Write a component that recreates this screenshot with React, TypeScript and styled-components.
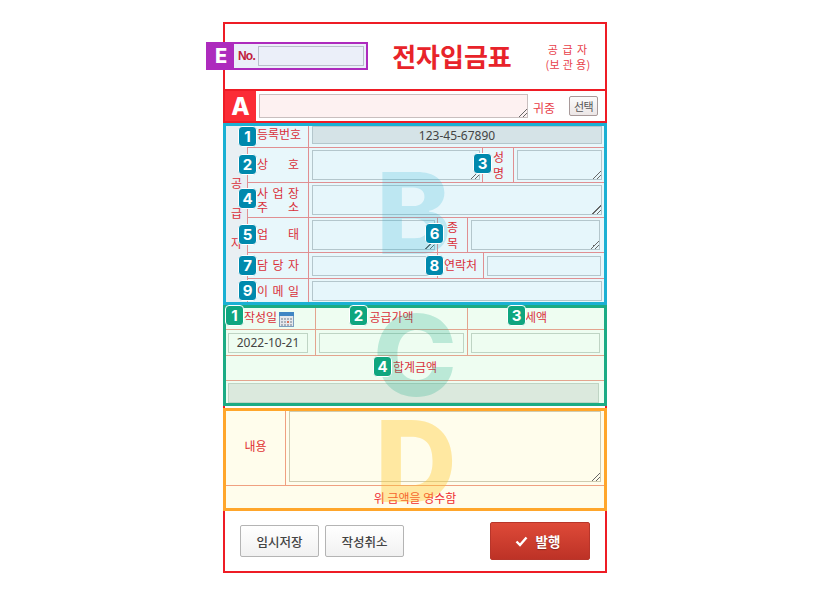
import React from 'react';
import styled, { createGlobalStyle } from 'styled-components';

const Global = createGlobalStyle`
  html, body { margin: 0; padding: 0; background: #fff; }
  body { font-family: 'Noto Sans CJK KR', 'Noto Sans', sans-serif; font-size: 12px; }
  * { box-sizing: border-box; }
`;

const Page = styled.div`
  width: 830px;
  height: 600px;
  padding: 22px 223px 0;
`;
const Frame = styled.div`
  width: 384px;
  height: 551px;
  border: 2px solid #ee1c25;
  display: flex;
  flex-direction: column;
  position: relative;
`;
const Head = styled.header`
  height: 65px;
  display: flex;
  align-items: center;
  padding: 0 15px 0 133px;
`;
const Title = styled.h1`
  margin: 0 0 2px;
  flex: 1;
  text-align: center;
  font-size: 26px;
  font-weight: 700;
  color: #e8232a;
  white-space: nowrap;
`;
const Who = styled.div`
  width: 44px;
  text-align: center;
  font-size: 11px;
  line-height: 15px;
  letter-spacing: 1px;
  color: #e8404a;
  white-space: nowrap;
`;
const WhoSub = styled.span`
  letter-spacing: 0.3px;
  margin-left: -3px;
  margin-right: -3px;
`;
const Tag = styled.div`
  position: absolute;
  left: -19px;
  top: 18px;
  width: 162px;
  height: 28px;
  display: flex;
  align-items: center;
  border: 2px solid #ad2bbd;
  background: #ebeff9;
`;
const TagLetter = styled.span`
  width: 26px;
  height: 24px;
  background: #ad2bbd;
  color: #fff;
  font: 800 20px 'Inter', sans-serif;
  display: flex;
  align-items: center;
  justify-content: center;
`;
const TagNo = styled.span`
  margin-left: 4px;
  width: 20px;
  font: 700 12px 'Liberation Sans', sans-serif;
  letter-spacing: -0.8px;
  color: #c0203c;
`;
const Field = styled.div<{ $w?: number; $h: number; $bg: string; $line: string; $grow?: boolean; $resize?: boolean }>`
  position: relative;
  flex: ${(p) => (p.$grow ? '1' : 'none')};
  width: ${(p) => (p.$w ? p.$w + 'px' : 'auto')};
  height: ${(p) => p.$h}px;
  background: ${(p) => p.$bg};
  border: 1px solid ${(p) => p.$line};
  display: flex;
  align-items: center;
  justify-content: center;
  font: 12px 'Noto Sans', 'Open Sans', sans-serif;
  color: #444;
  ${(p) =>
    p.$resize
      ? `&::after {
    content: '';
    position: absolute;
    right: 0;
    bottom: 0;
    width: 9px;
    height: 9px;
    background: linear-gradient(135deg, transparent 0 50%, #666 50% 58%, transparent 58% 74%, #666 74% 82%, transparent 82%);
  }`
      : ''}
`;
const RowA = styled.div`
  height: 34px;
  border-top: 2px solid #ee1c25;
  border-bottom: 2px solid #ee1c25;
  display: flex;
  align-items: center;
  background: #fff;
  padding-right: 7px;
`;
const LetterA = styled.span`
  width: 31px;
  height: 30px;
  background: #fb2c36;
  color: #fff;
  font: 800 24px 'Inter', sans-serif;
  display: flex;
  align-items: center;
  justify-content: center;
`;
const SpotA = styled.span`
  margin-left: 3px;
`;
const AText = styled.span`
  margin: 2px 0 0 5px;
  font-size: 12px;
  color: #e8404a;
  width: 36px;
  white-space: nowrap;
`;
const PickBtn = styled.button`
  width: 29px;
  height: 20px;
  padding: 0;
  margin-left: auto;
  border: 1px solid #a89a9a;
  border-radius: 2px;
  background: linear-gradient(#fbfbfb, #ece6e6);
  font: 11px 'Noto Sans CJK KR', sans-serif;
  letter-spacing: -0.5px;
  color: #555;
`;
const Section = styled.section<{ $border: string; $bg: string; $h: number; $gap?: number }>`
  position: relative;
  flex: none;
  height: ${(p) => p.$h}px;
  border: 3px solid ${(p) => p.$border};
  background: ${(p) => p.$bg};
  margin: ${(p) => p.$gap ?? 0}px -2px 0;
`;
const Mark = styled.span<{ $color: string; $top: number; $left: number }>`
  position: absolute;
  z-index: 1;
  pointer-events: none;
  left: ${(p) => p.$left}px;
  top: ${(p) => p.$top}px;
  font: 800 113px/113px 'Inter', sans-serif;
  color: ${(p) => p.$color};
`;
const Supplier = styled.div`
  display: flex;
  height: 100%;
`;
const SideLabel = styled.div`
  flex: none;
  width: 21px;
  background: #e9eff3;
  color: #d9303a;
  font-size: 12px;
  line-height: 30px;
  display: flex;
  flex-direction: column;
  align-items: center;
  justify-content: center;
  padding-bottom: 2px;
`;
const Rows = styled.div`
  flex: 1;
  min-width: 0;
  display: flex;
  flex-direction: column;
`;
const Row = styled.div<{ $h: number; $last?: boolean }>`
  flex: none;
  height: ${(p) => p.$h}px;
  display: flex;
  border-bottom: ${(p) => (p.$last ? 'none' : '1px solid #e08f92')};
`;
const Label = styled.div<{ $w: number; $first?: boolean; $pl?: number; $pb?: number }>`
  position: relative;
  flex: none;
  width: ${(p) => p.$w}px;
  height: 100%;
  border-left: ${(p) => (p.$first ? 'none' : '1px solid #e08f92')};
  color: #d9303a;
  font-size: 12px;
  line-height: 14px;
  white-space: nowrap;
  display: flex;
  flex-direction: column;
  justify-content: center;
  padding: 0 9px ${(p) => p.$pb ?? 1}px ${(p) => p.$pl ?? 9}px;
`;
const Spread = styled.div`
  display: flex;
  justify-content: space-between;
`;
const VLabel = styled(Label)`
  padding-right: 0;
  gap: 2px;
`;
const Slot = styled.div<{ $w?: number; $pl?: number; $pr?: number; $pb?: number }>`
  flex: ${(p) => (p.$w ? 'none' : '1')};
  width: ${(p) => (p.$w ? p.$w + 'px' : 'auto')};
  min-width: 0;
  height: 100%;
  display: flex;
  align-items: center;
  border-left: 1px solid #e08f92;
  padding: 0 ${(p) => p.$pr ?? 2}px ${(p) => p.$pb ?? 0}px ${(p) => p.$pl ?? 3}px;
`;
const Badge = styled.span<{ $c: string; $l: number; $t: number }>`
  position: absolute;
  z-index: 2;
  left: ${(p) => p.$l}px;
  top: ${(p) => p.$t}px;
  width: 19px;
  height: 21px;
  border: 1px solid #fff;
  border-radius: 4px;
  background: ${(p) => p.$c};
  color: #fff;
  font: 700 15px 'Inter', sans-serif;
  display: flex;
  align-items: center;
  justify-content: center;
`;
const Amount = styled.div`
  height: 100%;
`;
const Cols = styled.div<{ $h: number }>`
  height: ${(p) => p.$h}px;
  display: grid;
  grid-template-columns: 89px 152px 1fr;
  border-bottom: 1px solid #e3a48e;
`;
const Col = styled.div<{ $first?: boolean; $pl?: number; $pr?: number; $pb?: number }>`
  border-left: ${(p) => (p.$first ? 'none' : '1px solid #e3a48e')};
  color: #d9303a;
  font-size: 12px;
  display: flex;
  align-items: center;
  justify-content: center;
  padding: 0 ${(p) => p.$pr ?? 3}px ${(p) => p.$pb ?? 0}px ${(p) => p.$pl ?? 3}px;
`;
const DateHead = styled(Col)`
  justify-content: flex-start;
  padding: 0 0 0 18px;
  gap: 2px;
`;
const DateText = styled.span`
  margin-bottom: 5px;
`;
const Total = styled.div`
  height: 25px;
  border-bottom: 1px solid #e3a48e;
  display: flex;
  align-items: center;
  justify-content: center;
  color: #d9303a;
  font-size: 12px;
  padding-bottom: 4px;
`;
const TotalValue = styled.div`
  height: 22px;
  display: flex;
  align-items: flex-end;
  padding: 0 5px 0 2px;
`;
const NoteRow = styled.div`
  height: 75px;
  display: flex;
  border-bottom: 1px solid #f0a080;
`;
const NoteLabel = styled.div`
  width: 60px;
  display: flex;
  align-items: center;
  justify-content: center;
  border-right: 1px solid #f0a080;
  color: #e03030;
  font-size: 12px;
  padding-bottom: 6px;
`;
const NoteSlot = styled.div`
  flex: 1;
  padding: 0 3px 3px 3px;
  display: flex;
  align-items: flex-end;
`;
const Receipt = styled.div`
  height: 22px;
  display: flex;
  align-items: center;
  justify-content: center;
  color: #f02c30;
  font-size: 12px;
`;
const Foot = styled.footer`
  flex: 1;
  display: flex;
  align-items: center;
  padding: 0 15px;
  gap: 6px;
`;
const Button = styled.button`
  width: 79px;
  height: 32px;
  padding: 0;
  border: 1px solid #b4b4b4;
  border-radius: 2px;
  background: linear-gradient(#fff, #f1f1f1);
  font: 500 12.5px 'Noto Sans CJK KR', sans-serif;
  color: #444;
`;
const Submit = styled.button`
  margin-left: auto;
  width: 100px;
  height: 38px;
  padding: 0 5px 0 0;
  border: 1px solid #b8352a;
  border-radius: 2px;
  background: linear-gradient(#de4a38, #bd3226);
  color: #fff;
  font: 700 13.5px 'Noto Sans CJK KR', sans-serif;
  display: flex;
  align-items: center;
  justify-content: center;
  gap: 8px;
  text-shadow: 0 1px 1px rgba(0, 0, 0, 0.3);
`;

const BLUE = '#0089ad';
const GREEN = '#0fa67f';

const blueField = { $bg: '#e6f6fb', $line: '#b4c6cc' };
const greenField = { $bg: '#eefdf1', $line: '#bfd4c4' };

function CalendarIcon() {
  return (
    <svg width="15" height="15" viewBox="0 0 15 15">
      <rect x="0.5" y="0.5" width="14" height="14" fill="#e6e9ed" stroke="#7c9fc0" />
      <rect x="0" y="0" width="15" height="4" fill="#3f86c4" />
      {[2, 5, 8, 11].map((x) =>
        [6, 9, 12].map((y) => <rect key={`${x}-${y}`} x={x} y={y} width="2" height="2" fill={x === 8 && y === 9 ? '#d9705a' : '#aab2bc'} />),
      )}
    </svg>
  );
}

export default function App() {
  return (
    <Page>
      <Global />
      <Frame>
        <Head>
          <Title>전자입금표</Title>
          <Who>
            공 급 자
            <br />
            <WhoSub>(보 관 용)</WhoSub>
          </Who>
        </Head>
        <Tag>
          <TagLetter>E</TagLetter>
          <TagNo>No.</TagNo>
          <Field $w={106} $h={20} $bg="#ebeff9" $line="#b9bfcb" />
        </Tag>

        <RowA>
          <LetterA>A</LetterA>
          <SpotA>
            <Field $w={269} $h={24} $bg="#fdf1f1" $line="#c9bfbf" $resize />
          </SpotA>
          <AText>귀중</AText>
          <PickBtn>선택</PickBtn>
        </RowA>

        <Section $border="#1bb0d3" $bg="#e8f7fb" $h={182}>
          <Mark $color="rgba(27, 176, 211, 0.2)" $left={150} $top={31}>
            B
          </Mark>
          <Supplier>
            <SideLabel>
              <span>공</span>
              <span>급</span>
              <span>자</span>
            </SideLabel>
            <Rows>
              <Row $h={22}>
                <Label $w={61} $first $pl={10} $pb={5}>
                  <Badge $c={BLUE} $l={-9} $t={0}>1</Badge>
                  등록번호
                </Label>
                <Slot $pb={3}>
                  <Field $grow $h={18} $bg="#d5e3e7" $line="#b4c6cc">123-45-67890</Field>
                </Slot>
              </Row>
              <Row $h={35}>
                <Label $w={61} $pb={3}>
                  <Badge $c={BLUE} $l={-10} $t={6}>2</Badge>
                  <Spread><span>상</span><span>호</span></Spread>
                </Label>
                <Slot $w={174}>
                  <Field $grow $h={30} {...blueField} $resize />
                </Slot>
                <VLabel $w={31} $pl={10}>
                  <Badge $c={BLUE} $l={-10} $t={5}>3</Badge>
                  <span>성</span>
                  <span>명</span>
                </VLabel>
                <Slot>
                  <Field $grow $h={30} {...blueField} $resize />
                </Slot>
              </Row>
              <Row $h={35}>
                <Label $w={61}>
                  <Badge $c={BLUE} $l={-10} $t={5}>4</Badge>
                  <Spread><span>사</span><span>업</span><span>장</span></Spread>
                  <Spread><span>주</span><span>소</span></Spread>
                </Label>
                <Slot>
                  <Field $grow $h={30} {...blueField} $resize />
                </Slot>
              </Row>
              <Row $h={35}>
                <Label $w={61} $pb={3}>
                  <Badge $c={BLUE} $l={-10} $t={6}>5</Badge>
                  <Spread><span>업</span><span>태</span></Spread>
                </Label>
                <Slot $w={129}>
                  <Field $grow $h={30} {...blueField} $resize />
                </Slot>
                <VLabel $w={30} $pl={9}>
                  <Badge $c={BLUE} $l={-13} $t={5}>6</Badge>
                  <span>종</span>
                  <span>목</span>
                </VLabel>
                <Slot $pr={4}>
                  <Field $grow $h={30} {...blueField} $resize />
                </Slot>
              </Row>
              <Row $h={26}>
                <Label $w={61} $pb={2}>
                  <Badge $c={BLUE} $l={-10} $t={2}>7</Badge>
                  <Spread><span>담</span><span>당</span><span>자</span></Spread>
                </Label>
                <Slot $w={129}>
                  <Field $grow $h={20} {...blueField} />
                </Slot>
                <Label $w={46} $pl={6} $pb={2}>
                  <Badge $c={BLUE} $l={-13} $t={2}>8</Badge>
                  연락처
                </Label>
                <Slot $pr={3}>
                  <Field $grow $h={20} {...blueField} />
                </Slot>
              </Row>
              <Row $h={23} $last>
                <Label $w={61} $pb={0}>
                  <Badge $c={BLUE} $l={-10} $t={1}>9</Badge>
                  <Spread><span>이</span><span>메</span><span>일</span></Spread>
                </Label>
                <Slot>
                  <Field $grow $h={20} {...blueField} />
                </Slot>
              </Row>
            </Rows>
          </Supplier>
        </Section>

        <Section $border="#1bab84" $bg="#eefdf1" $h={101}>
          <Mark $color="rgba(27, 171, 132, 0.24)" $left={147} $top={-9}>
            C
          </Mark>
          <Amount>
            <Cols $h={22}>
              <DateHead $first>
                <Badge $c={GREEN} $l={-1} $t={-3}>1</Badge>
                <DateText>작성일</DateText>
                <CalendarIcon />
              </DateHead>
              <Col $pb={5}>
                <Badge $c={GREEN} $l={123} $t={-3}>2</Badge>
                공급가액
              </Col>
              <Col $pb={5}>
                <Badge $c={GREEN} $l={281} $t={-3}>3</Badge>
                세액
              </Col>
            </Cols>
            <Cols $h={26}>
              <Col $first $pl={2} $pr={7}>
                <Field $grow $h={20} {...greenField}>2022-10-21</Field>
              </Col>
              <Col>
                <Field $grow $h={20} {...greenField} />
              </Col>
              <Col $pr={4}>
                <Field $grow $h={20} {...greenField} />
              </Col>
            </Cols>
            <Total>
              <Badge $c={GREEN} $l={147} $t={48}>4</Badge>
              합계금액
            </Total>
            <TotalValue>
              <Field $grow $h={20} $bg="#dbe9dd" $line="#bfd4c4" />
            </TotalValue>
          </Amount>
        </Section>

        <Section $border="#ffa62b" $bg="#fffdec" $h={103} $gap={2}>
          <Mark $color="rgba(255, 196, 40, 0.38)" $left={149} $top={-6}>
            D
          </Mark>
          <NoteRow>
            <NoteLabel>내용</NoteLabel>
            <NoteSlot>
              <Field $grow $h={71} $bg="#fffdec" $line="#cfcbb0" $resize />
            </NoteSlot>
          </NoteRow>
          <Receipt>위 금액을 영수함</Receipt>
        </Section>

        <Foot>
          <Button>임시저장</Button>
          <Button>작성취소</Button>
          <Submit>
            <svg width="13" height="11" viewBox="0 0 13 11">
              <path d="M1.5 5.5 L5 9 L11.5 1.5" fill="none" stroke="#fff" strokeWidth="2.4" />
            </svg>
            발행
          </Submit>
        </Foot>
      </Frame>
    </Page>
  );
}
